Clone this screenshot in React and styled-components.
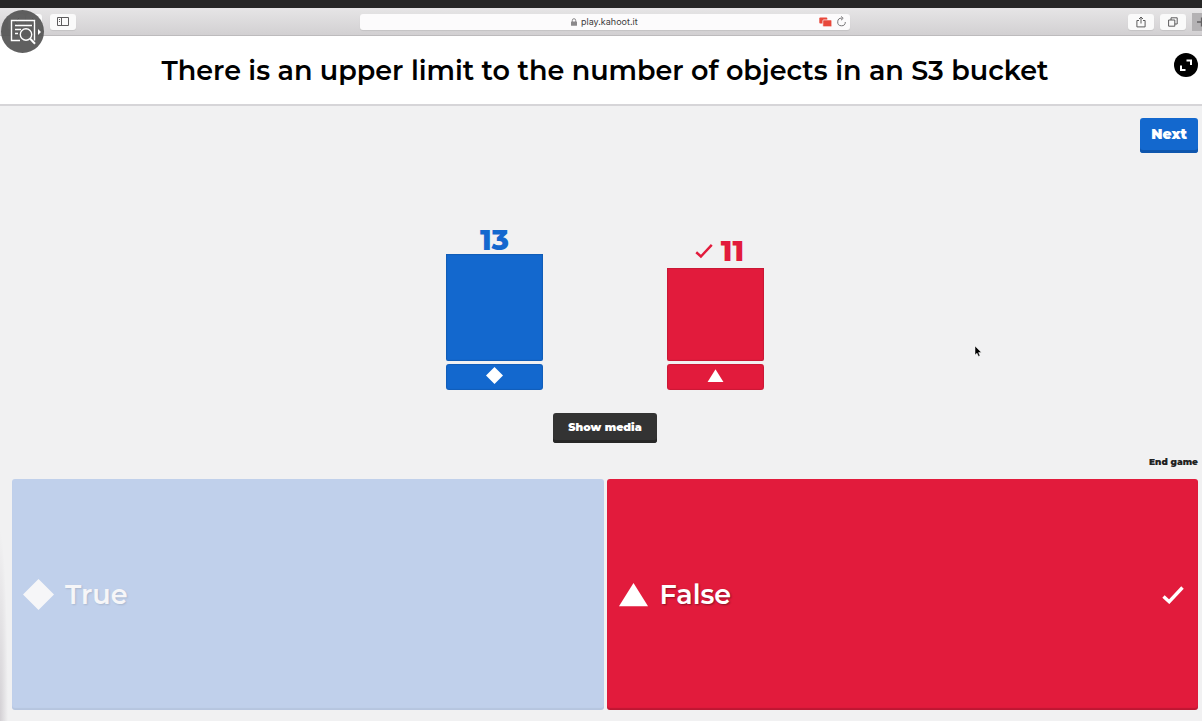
import React from "react";
import styled, { createGlobalStyle } from "styled-components";

const BLUE = "#1368ce";
const RED = "#e21b3c";

const GlobalStyle = createGlobalStyle`
  *, *::before, *::after { box-sizing: border-box; }
  html, body { margin: 0; }
  body {
    font-family: Montserrat, Inter, "Liberation Sans", sans-serif;
    color: #111;
    background: #f1f1f2;
  }
  button, input { font: inherit; color: inherit; border: 0; margin: 0; padding: 0; background: none; }
  button { cursor: pointer; }
  svg { display: block; }
`;

const Page = styled.div`
  position: relative;
  display: flex;
  flex-direction: column;
  min-height: 100vh;
  overflow: hidden;
`;

const Toolbar = styled.div`
  display: grid;
  grid-template-columns: 352fr 490fr 352fr;
  align-items: center;
  height: 36px;
  padding-left: 8px;
  border-top: 8px solid #262626;
  border-bottom: 1px solid #bdbbbd;
  background: linear-gradient(#e6e5e6, #d2d0d2);
`;

const ToolGroup = styled.div`
  display: flex;
  align-items: center;
  justify-content: ${(p) => (p.$end ? "flex-end" : "flex-start")};
  gap: ${(p) => (p.$end ? 6 : 8)}px;
`;

const NavPair = styled.div`
  display: flex;
  gap: 1px;
`;

const ToolButton = styled.button`
  display: grid;
  place-items: center;
  width: ${(p) => p.$width || 26}px;
  height: 16px;
  border-radius: 3px;
  background: #fafafa;
  color: #5d5c5d;
  box-shadow: 0 1px 1px rgba(0, 0, 0, 0.08);
`;

const NewTab = styled.button`
  display: grid;
  place-items: center start;
  align-self: flex-end;
  width: 10px;
  height: 18px;
  overflow: hidden;
  background: #b4b2b4;
  color: #636163;
`;

const AddressBar = styled.div`
  display: grid;
  grid-template-columns: 1fr auto 1fr;
  align-items: center;
  height: 16px;
  padding: 0 4px;
  border-radius: 3px;
  background: #fcfbfc;
  box-shadow: 0 1px 1px rgba(0, 0, 0, 0.08);
`;

const Address = styled.label`
  grid-column: 2;
  display: flex;
  align-items: center;
  gap: 4px;
  color: #8b898b;
`;

const AddressInput = styled.input`
  width: 58px;
  height: 14px;
  color: #3c3b3c;
  font-family: Inter, sans-serif;
  font-size: 9px;
  line-height: 14px;
  outline: 0;
`;

const AddressActions = styled.div`
  display: flex;
  align-items: center;
  justify-content: flex-end;
  gap: 5px;
  color: #777577;
`;

const Header = styled.header`
  display: grid;
  grid-template-columns: 24px 1fr 24px;
  align-items: start;
  padding: 17px 4px 16px 12px;
  border-bottom: 2px solid #d6d5d8;
  background: #fff;
`;

const Question = styled.h1`
  grid-column: 2;
  margin: 0;
  font-size: 27px;
  font-weight: 600;
  line-height: 35px;
  text-align: center;
  color: #000;
`;

const RoundButton = styled.button`
  width: 24px;
  height: 24px;
  border-radius: 50%;
  background: #000;
  color: #fff;
`;

const Main = styled.main`
  flex: 1;
  display: flex;
  flex-direction: column;
  padding: 12px 4px 11px 12px;
  background: radial-gradient(8px 190px at 0 100%, #d3d0d4, rgba(241, 241, 242, 0)), #f1f1f2;
`;

const ActionRow = styled.div`
  display: flex;
  justify-content: ${(p) => (p.$center ? "center" : "flex-end")};
`;

const SolidButton = styled.button`
  height: ${(p) => (p.$dark ? 30 : 35)}px;
  padding: 0 ${(p) => (p.$dark ? 15 : 11)}px 3px;
  border-radius: 3px;
  background: ${(p) => (p.$dark ? "#333" : BLUE)};
  box-shadow: inset 0 -3px ${(p) => (p.$dark ? "#272727" : "#0f56ad")};
  color: #fff;
  font-size: ${(p) => (p.$dark ? 11 : 14)}px;
  font-weight: 900;
  white-space: nowrap;
`;

const Chart = styled.section`
  display: flex;
  justify-content: center;
  align-items: flex-end;
  gap: 124px;
  min-height: 237px;
  margin-bottom: 23px;
`;

const Column = styled.div`
  display: flex;
  flex-direction: column;
  width: 97px;
  color: ${(p) => p.$color};
`;

const Count = styled.div`
  display: flex;
  justify-content: center;
  align-items: center;
  gap: 8px;
  padding: ${(p) => (p.$correct ? "0 0 3px 8px" : "0")};
  font-size: 29px;
  font-weight: 800;
  line-height: 28px;
`;

const Bar = styled.div`
  margin-bottom: 3px;
  border-radius: 0 0 2px 2px;
  background: currentColor;
  box-shadow: inset 0 0 1px 1px rgba(0, 0, 0, 0.12);
`;

const BarLabel = styled.div`
  display: grid;
  place-items: center;
  height: 26px;
  padding-bottom: 3px;
  border-radius: 3px;
  background: ${(p) => p.$color};
  box-shadow: inset 0 0 1px 1px rgba(0, 0, 0, 0.1);
  color: #fff;
`;

const EndGame = styled.button`
  font-size: 9px;
  font-weight: 900;
  line-height: 16px;
  margin: 11px 0 9px;
  color: #222;
`;

const Answers = styled.div`
  flex: 1;
  display: grid;
  grid-template-columns: 1fr 1fr;
  gap: 3px;
  min-height: 120px;
`;

const Answer = styled.button`
  display: flex;
  align-items: center;
  gap: 11px;
  padding: 0 14px 0 11px;
  border-radius: 3px;
  background: ${(p) => p.$background};
  box-shadow: inset 0 -2px 1px rgba(0, 0, 0, ${(p) => (p.$faded ? 0.05 : 0.16)});
  color: ${(p) => (p.$faded ? "#f6f6f8" : "#fff")};
  font-size: 27px;
  font-weight: 600;
  text-align: left;
  text-shadow: 1px 1px 2px rgba(0, 0, 0, ${(p) => (p.$faded ? 0.12 : 0.4)});
`;

const AnswerText = styled.span`
  flex: 1;
`;

const SearchBubble = styled.button`
  position: absolute;
  top: 10px;
  left: 1px;
  width: 43px;
  height: 43px;
  border-radius: 50%;
  background: rgba(82, 82, 82, 0.92);
  color: #fff;
`;

const Pointer = styled.svg`
  position: absolute;
  top: 345px;
  left: 974px;
`;

function Shape({ kind, size }) {
  return (
    <svg width={size} height={size} viewBox="0 0 32 32" fill="currentColor" aria-hidden="true">
      {kind === "diamond" ? <path d="M16 0 32 16 16 32 0 16Z" /> : <path d="M16 4 31 28H1Z" />}
    </svg>
  );
}

function Check({ width, height, stroke }) {
  return (
    <svg width={width} height={height} viewBox="0 0 22 18" fill="none" stroke="currentColor" strokeWidth={stroke} aria-label="Correct">
      <path d="M1.5 10.5 7.2 15.7 20.5 1.5" />
    </svg>
  );
}

const results = [
  { count: 13, height: 107, color: BLUE, shape: "diamond" },
  { count: 11, height: 93, color: RED, shape: "triangle", correct: true },
];

export default function App() {
  return (
    <Page>
      <GlobalStyle />
      <Toolbar>
        <ToolGroup>
          <NavPair>
            <ToolButton $width={17} aria-label="Back">
              <svg width="6" height="10" fill="none" stroke="currentColor"><path d="M5 1 1 5l4 4" /></svg>
            </ToolButton>
            <ToolButton $width={16} aria-label="Forward">
              <svg width="6" height="10" fill="none" stroke="currentColor"><path d="m1 1 4 4-4 4" /></svg>
            </ToolButton>
          </NavPair>
          <ToolButton aria-label="Sidebar">
            <svg width="12" height="10" fill="none" stroke="currentColor">
              <path d="M.5.5h11v8H.5zM4.5.5v8M2 2.5h1M2 4.5h1" />
            </svg>
          </ToolButton>
        </ToolGroup>
        <AddressBar>
          <Address>
            <svg width="6" height="8" viewBox="0 0 6 8" aria-hidden="true">
              <path d="M1.3 4V2.4a1.7 1.7 0 0 1 3.4 0V4" fill="none" stroke="currentColor" />
              <rect y="3.5" width="6" height="4.2" rx=".5" fill="currentColor" />
            </svg>
            <AddressInput type="text" aria-label="Address" defaultValue="play.kahoot.it" />
          </Address>
          <AddressActions>
            <svg width="13" height="10" viewBox="0 0 13 10" aria-hidden="true">
              <rect x=".3" y=".5" width="8" height="6" rx="1" fill="#e8483b" />
              <rect x="3.8" y="2.9" width="9" height="6.8" rx="1" fill="#e8483b" stroke="#fcfbfc" strokeWidth=".7" />
            </svg>
            <svg width="9" height="11" viewBox="0 0 9 11" fill="none" stroke="currentColor" aria-hidden="true">
              <path d="M4.8 2.2A3.8 3.8 0 1 0 8.3 6M4 .4l2.2 1.9L4 4.2" />
            </svg>
          </AddressActions>
        </AddressBar>
        <ToolGroup $end>
          <ToolButton aria-label="Share">
            <svg width="10" height="12" viewBox="0 0 10 12" fill="none" stroke="currentColor">
              <path d="M3 4.5H.9v6.4h8.2V4.5H7M5 7.5V1M3 3l2-2 2 2" />
            </svg>
          </ToolButton>
          <ToolButton aria-label="Tabs">
            <svg width="10" height="10" viewBox="0 0 10 10" fill="none" stroke="currentColor">
              <path d="M.6 3h6.2v6.2H.6zM3 3V.8h6.2V7H6.8" />
            </svg>
          </ToolButton>
          <NewTab aria-label="New tab">
            <svg width="14" height="10" fill="none" stroke="currentColor" strokeWidth="1.3"><path d="M5 5h9M9.5.5v9" /></svg>
          </NewTab>
        </ToolGroup>
      </Toolbar>

      <Header>
        <Question>There is an upper limit to the number of objects in an S3 bucket</Question>
        <RoundButton aria-label="Fullscreen">
          <svg width="24" height="24" fill="none" stroke="currentColor" strokeWidth="2">
            <path d="M12.5 7.5h4.5V12M7 12.5V17h4.5" />
          </svg>
        </RoundButton>
      </Header>

      <Main>
        <ActionRow>
          <SolidButton>Next</SolidButton>
        </ActionRow>
        <Chart aria-label="Answer results">
          {results.map((r) => (
            <Column key={r.shape} $color={r.color}>
              <Count $correct={r.correct}>
                {r.correct && <Check width={18} height={16} stroke={3} />}
                {r.count}
              </Count>
              <Bar style={{ height: r.height }} />
              <BarLabel $color={r.color}>
                <Shape kind={r.shape} size={17} />
              </BarLabel>
            </Column>
          ))}
        </Chart>
        <ActionRow $center>
          <SolidButton $dark>Show media</SolidButton>
        </ActionRow>
        <ActionRow>
          <EndGame>End game</EndGame>
        </ActionRow>
        <Answers>
          <Answer $background="#c0d0eb" $faded>
            <Shape kind="diamond" size={31} />
            <AnswerText>True</AnswerText>
          </Answer>
          <Answer $background={RED}>
            <Shape kind="triangle" size={31} />
            <AnswerText>False</AnswerText>
            <Check width={22} height={18} stroke={3.4} />
          </Answer>
        </Answers>
      </Main>

      <SearchBubble aria-label="Search content">
        <svg width="43" height="43" viewBox="0 0 43 43" fill="none" stroke="currentColor" strokeWidth="1.4">
          <path d="M19 30.5h-8.5v-20h23v20M14 15.5h17M14 19.5h6M14 23.5h3" />
          <circle cx="25" cy="24.5" r="5.7" />
          <path d="m29.2 28.7 4.8 5" strokeWidth="2" />
          <path d="M37 19v6l3-3Z" fill="currentColor" stroke="none" />
        </svg>
      </SearchBubble>
      <Pointer width="8" height="13" viewBox="0 0 8 13" aria-hidden="true">
        <path d="M1 1v9l2-1.8 1.5 3.3 1.5-.7L4.6 7.6H7.5Z" fill="#000" stroke="#fff" strokeWidth=".5" />
      </Pointer>
    </Page>
  );
}
